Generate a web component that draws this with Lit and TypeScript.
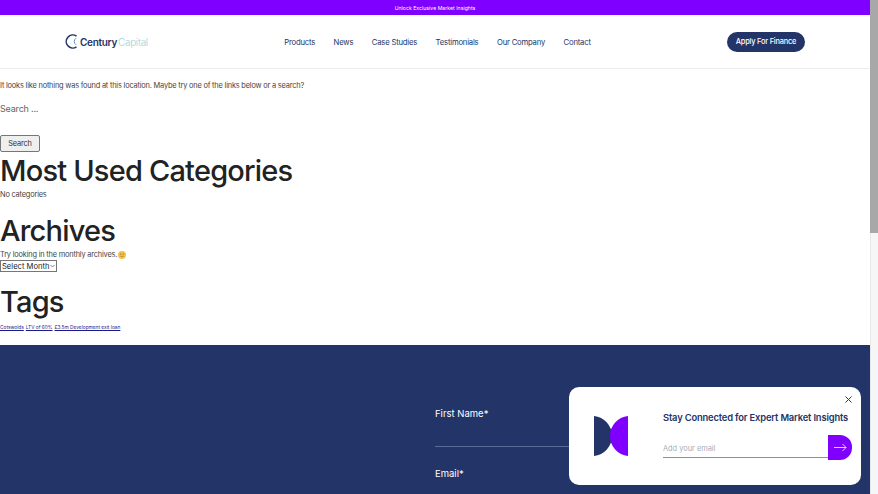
import { LitElement, html, css } from "lit";
import { customElement } from "lit/decorators.js";

@customElement("app-root")
export class AppRoot extends LitElement {
  static styles = css`
    :host { display: flex; position: relative; width: 878px; height: 494px; overflow: hidden; background: #fff; font-family: "Inter", "Liberation Sans", sans-serif; color: #444; }
    * { box-sizing: border-box; }
    .page { flex: 1; min-width: 0; height: 494px; overflow: hidden; }
    .rail { flex: none; width: 8px; height: 494px; background: #f6f6f6; border-left: 1px solid #e8e8e8; }
    .thumb { height: 233px; margin-left: -1px; background: #a8a8a8; }
    .topbar { height: 15px; background: #7f00ff; color: #fff; font-size: 5.2px; line-height: 16px; text-align: center; }
    .header { height: 54px; border-bottom: 1px solid #ececec; display: flex; align-items: center; padding: 0 65px; justify-content: space-between; }
    .logo { display: flex; align-items: center; width: 84px; font-size: 10px; white-space: nowrap; }
    .logo svg { margin-right: 3px; flex: none; }
    .logo b { color: #233468; font-weight: 600; letter-spacing: -0.3px; margin-right: 1px; }
    .logo span { color: #9cd0de; font-weight: 300; letter-spacing: -0.3px; }
    nav { display: flex; gap: 18.5px; padding-top: 1px; font-size: 7.7px; letter-spacing: -0.2px; color: #233468; }
    .cta { width: 78px; height: 20px; margin-left: 1px; border-radius: 10px; background: #233468; color: #fff; font-size: 7.4px; letter-spacing: -0.2px; font-weight: 500; display: flex; align-items: center; justify-content: center; }
    main { height: 276px; font-size: 7.4px; letter-spacing: -0.19px; }
    p { margin: 0; }
    .lead { padding-top: 11px; line-height: 11px; }
    .searchlabel { margin-top: 11px; height: 13px; font-size: 9px; line-height: 13px; color: #666; }
    .btn { margin-top: 20px; width: 40px; height: 17px; border: 1px solid #767676; border-radius: 2px; background: #efefef; font-size: 7.4px; display: flex; align-items: center; justify-content: center; color: #333; }
    h2 { margin: 0; font-weight: 500; color: #222; font-size: 29px; letter-spacing: -0.8px; line-height: 38px; }
    .none { line-height: 11px; margin-top: -1px; margin-bottom: 12px; }
    .arch { line-height: 11px; margin-top: -1px; display: flex; align-items: center; gap: 1px; }
    .select { width: 57px; height: 12px; border: 1px solid #767676; font-size: 7.6px; letter-spacing: 0; padding: 0 1px 0 1px; color: #222; display: flex; align-items: center; justify-content: space-between; white-space: nowrap; }
    .tags { display: flex; gap: 2px; font-size: 4.8px; letter-spacing: 0; color: #1a1a8c; text-decoration: underline; margin-top: 3px; }
    .tagsh { margin-top: 11px; }
    footer { height: 702px; background: #233468; color: #fff; padding: 63px 0 0 435px; font-size: 9.5px; }
    .field { height: 60px; width: 300px; }
    .field .line { margin-top: 27px; height: 1px; background: #5b6a96; }
    .popup { position: absolute; left: 569px; top: 387px; width: 292px; height: 98px; background: #fff; border-radius: 10px; display: flex; padding: 29px 9px 0 25px; }
    .close { position: absolute; right: 8px; top: 8px; }
    .mark { flex: none; margin-right: 35px; }
    .body { flex: 1; min-width: 0; }
    .title { font-size: 9.4px; letter-spacing: -0.17px; font-weight: 600; color: #233468; margin-top: -4px; line-height: 12px; white-space: nowrap; }
    .row { display: flex; height: 25px; margin-top: 11px; }
    .input { flex: 1; border-bottom: 1px solid #8a8f9e; height: 23px; padding-top: 4px; display: flex; align-items: center; font-size: 7.4px; color: #a9adb9; }
    .go { width: 24px; height: 25px; background: #7f00ff; border-radius: 0 12px 12px 0; display: flex; align-items: center; justify-content: center; }
  `;

  render() {
    return html`
      <div class="page">
        <div class="topbar">Unlock Exclusive Market Insights</div>
        <header class="header">
          <div class="logo">
            <svg width="12" height="15" viewBox="0 0 12 15" fill="none" stroke="#233468">
              <path d="M11.5 2.2A6.5 6.5 0 1 0 11.5 12.8" stroke-width="1.6" />
              <path d="M11 4.2A4 4 0 0 0 11 10.8" stroke="#5b95b5" stroke-width="1" />
            </svg>
            <b>Century</b><span>Capital</span>
          </div>
          <nav>
            <span>Products</span><span>News</span><span>Case Studies</span><span>Testimonials</span><span>Our Company</span><span>Contact</span>
          </nav>
          <div class="cta">Apply For Finance</div>
        </header>
        <main>
          <p class="lead">It looks like nothing was found at this location. Maybe try one of the links below or a search?</p>
          <div class="searchlabel">Search ...</div>
          <div class="btn">Search</div>
          <h2>Most Used Categories</h2>
          <p class="none">No categories</p>
          <h2>Archives</h2>
          <div class="arch">Try looking in the monthly archives.
            <svg width="8" height="8" viewBox="0 0 8 8"><circle cx="4" cy="4" r="4" fill="#f4c04a" /><circle cx="2.7" cy="3" r=".6" fill="#7a5a20" /><circle cx="5.3" cy="3" r=".6" fill="#7a5a20" /><path d="M2.6 5.4h2.8" stroke="#7a5a20" stroke-width=".5" /></svg>
          </div>
          <div class="select">Select Month
            <svg width="5" height="4" viewBox="0 0 5 4" fill="none" stroke="#555" stroke-width=".7"><path d="M.5 1l2 2 2-2" /></svg>
          </div>
          <h2 class="tagsh">Tags</h2>
          <div class="tags"><span>Cotswolds</span><span>LTV of 60%</span><span>£3.5m Development exit loan</span></div>
        </main>
        <footer>
          <div class="field">First Name*<div class="line"></div></div>
          <div class="field">Email*<div class="line"></div></div>
        </footer>
      </div>
      <div class="rail"><div class="thumb"></div></div>
      <aside class="popup">
        <svg class="close" width="9" height="9" viewBox="0 0 9 9" stroke="#233468" stroke-width="1"><path d="M1.5 1.5l6 6M7.5 1.5l-6 6" /></svg>
        <svg class="mark" width="34" height="40" viewBox="0 0 34 40">
          <path d="M0 0A20 20 0 0 1 18 20A20 20 0 0 1 0 40Z" fill="#233468" />
          <path d="M34 0A20 20 0 0 0 16 20A20 20 0 0 0 34 40Z" fill="#7f00ff" />
        </svg>
        <div class="body">
          <div class="title">Stay Connected for Expert Market Insights</div>
          <div class="row">
            <div class="input">Add your email</div>
            <div class="go">
              <svg width="13" height="9" viewBox="0 0 13 9" fill="none" stroke="#fff" stroke-width=".8"><path d="M0 4.5h12M8.5 1l3.5 3.5L8.5 8" /></svg>
            </div>
          </div>
        </div>
      </aside>
    `;
  }
}
